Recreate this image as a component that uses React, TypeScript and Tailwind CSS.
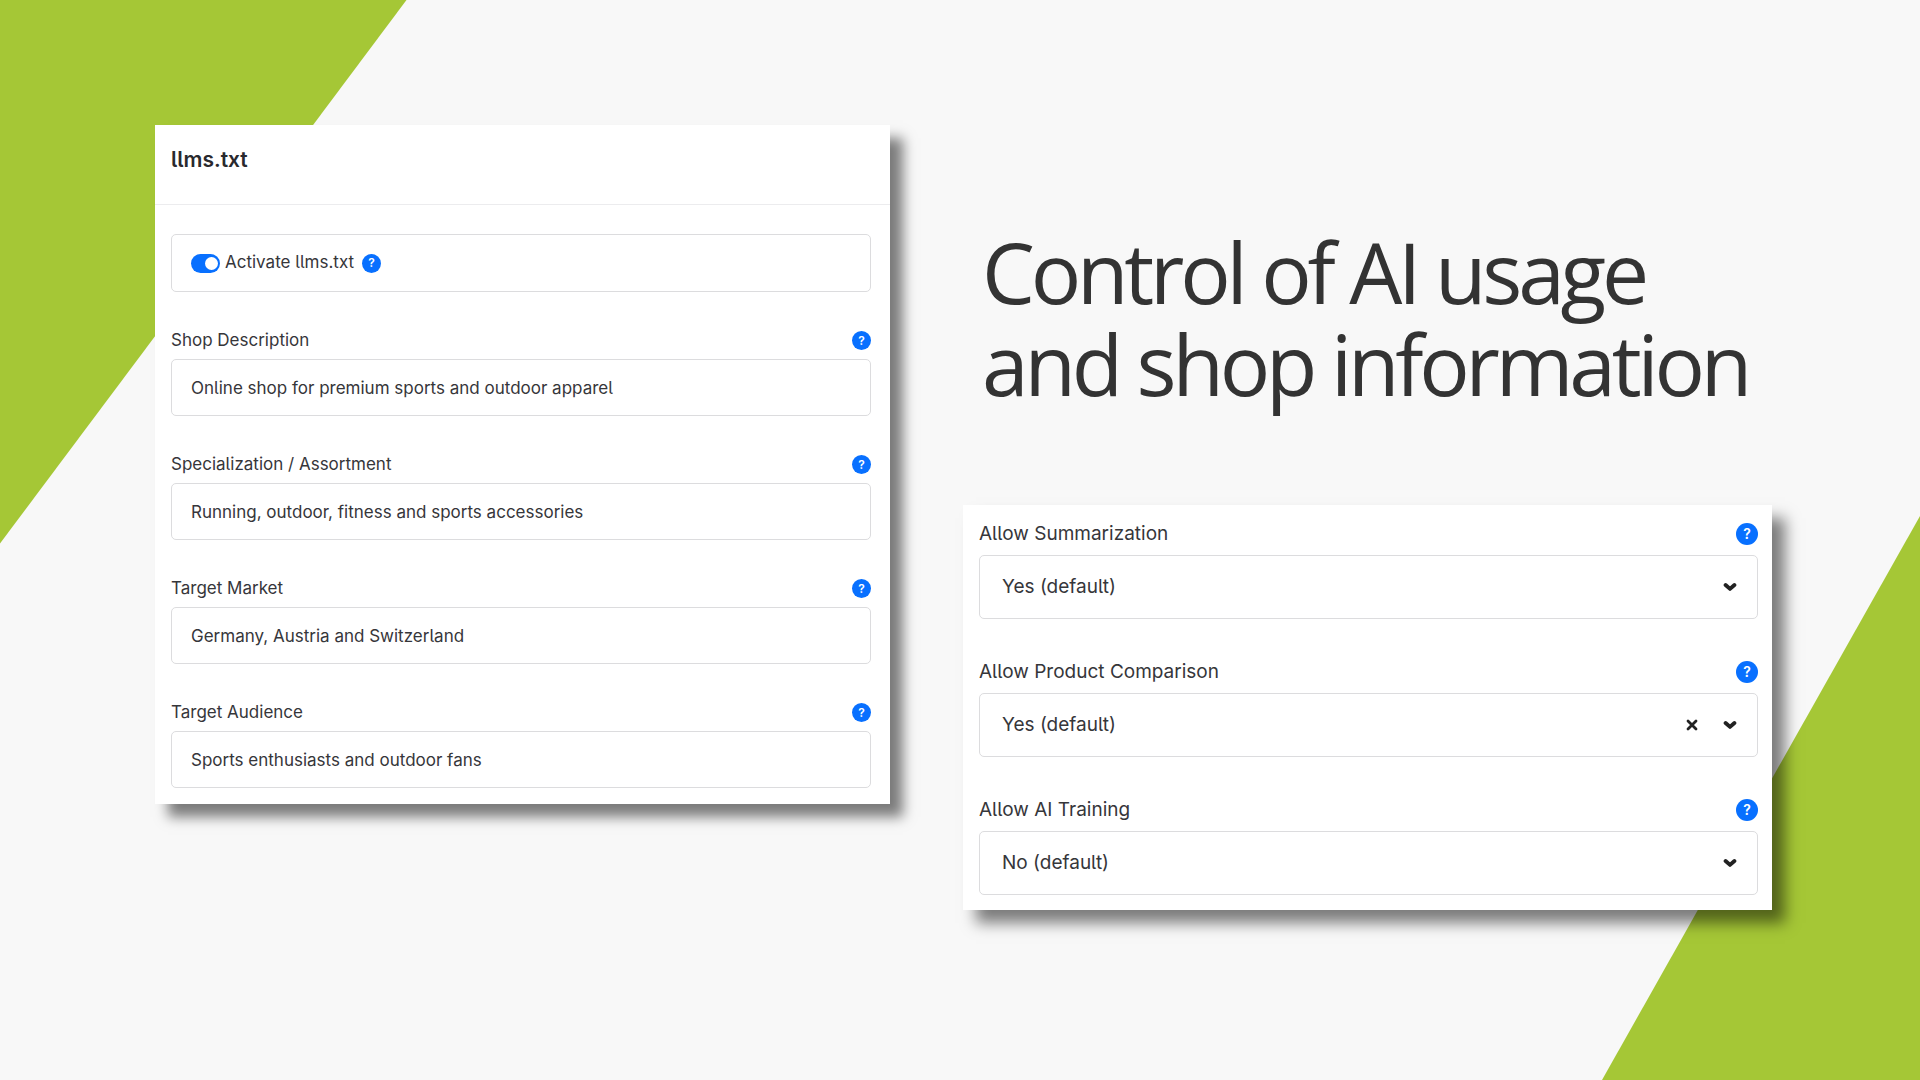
import React, { useState } from "react";
import clsx from "clsx";

interface HelpButtonProps {
  label: string;
  large?: boolean;
}

const HelpButton: React.FC<HelpButtonProps> = ({ label, large }) => (
  <button
    type="button"
    aria-label={`Help: ${label}`}
    className={clsx(
      "flex shrink-0 items-center justify-center rounded-full bg-[#0870ff] font-semibold text-white",
      large ? "size-[22px] text-sm" : "size-[19px] text-xs"
    )}
  >
    ?
  </button>
);

interface TextFieldProps {
  id: string;
  label: string;
  defaultValue: string;
}

const TextField: React.FC<TextFieldProps> = ({ id, label, defaultValue }) => (
  <div>
    <div className="mb-2 flex h-[21px] items-center justify-between">
      <label htmlFor={id}>{label}</label>
      <HelpButton label={label} />
    </div>
    <input
      id={id}
      type="text"
      defaultValue={defaultValue}
      className="block h-[57px] w-full rounded-[5px] border border-[#dcdcde] bg-white px-[19px] outline-none focus:border-[#0870ff]"
    />
  </div>
);

interface SelectFieldProps {
  id: string;
  label: string;
  defaultValue: string;
  clearable?: boolean;
}

const SelectField: React.FC<SelectFieldProps> = ({
  id,
  label,
  defaultValue,
  clearable,
}) => {
  const [value, setValue] = useState(defaultValue);

  return (
    <div>
      <div className="mb-[10px] flex h-[22px] items-center justify-between">
        <label htmlFor={id}>{label}</label>
        <HelpButton label={label} large />
      </div>
      <div className="relative">
        <select
          id={id}
          value={value}
          onChange={(e) => setValue(e.target.value)}
          className="block h-16 w-full appearance-none rounded-[5px] border border-[#dcdcde] bg-white px-[22px] outline-none focus:border-[#0870ff]"
        >
          <option value="yes">Yes (default)</option>
          <option value="no">No (default)</option>
        </select>
        <div className="pointer-events-none absolute inset-y-0 right-[21px] flex items-center gap-[25px]">
          {clearable && (
            <button
              type="button"
              aria-label={`Clear ${label}`}
              onClick={() => setValue(defaultValue)}
              className="pointer-events-auto"
            >
              <svg viewBox="0 0 12 12" className="size-3" aria-hidden="true">
                <path
                  d="M2 2l8 8M10 2l-8 8"
                  fill="none"
                  stroke="#222"
                  strokeWidth="2.8"
                  strokeLinecap="round"
                />
              </svg>
            </button>
          )}
          <svg viewBox="0 0 14 10" className="h-[10px] w-[14px]" aria-hidden="true">
            <path
              d="M2.6 3L7 6.9 11.4 3"
              fill="none"
              stroke="#222"
              strokeWidth="3.9"
              strokeLinecap="round"
              strokeLinejoin="round"
            />
          </svg>
        </div>
      </div>
    </div>
  );
};

const textFields: TextFieldProps[] = [
  {
    id: "shop-description",
    label: "Shop Description",
    defaultValue: "Online shop for premium sports and outdoor apparel",
  },
  {
    id: "specialization",
    label: "Specialization / Assortment",
    defaultValue: "Running, outdoor, fitness and sports accessories",
  },
  {
    id: "target-market",
    label: "Target Market",
    defaultValue: "Germany, Austria and Switzerland",
  },
  {
    id: "target-audience",
    label: "Target Audience",
    defaultValue: "Sports enthusiasts and outdoor fans",
  },
];

const selectFields: SelectFieldProps[] = [
  { id: "summarization", label: "Allow Summarization", defaultValue: "yes" },
  {
    id: "comparison",
    label: "Allow Product Comparison",
    defaultValue: "yes",
    clearable: true,
  },
  { id: "training", label: "Allow AI Training", defaultValue: "no" },
];

export default function App() {
  const [active, setActive] = useState(true);

  return (
    <main className="relative min-h-screen overflow-hidden bg-[#f8f8f8] font-['Inter',sans-serif] text-[#36363a] [font-feature-settings:'cv05']">
      {/* green corners */}
      <svg
        viewBox="0 0 1920 1080"
        preserveAspectRatio="none"
        className="absolute inset-0 h-full w-full"
        aria-hidden="true"
      >
        <path d="M0 0H406.500L0 543.500Z" fill="#a5c736" />
        <path d="M1920 516V1080H1602Z" fill="#a5c736" />
      </svg>

      <div className="relative grid grid-cols-[735fr_809fr] items-start gap-[73px] pt-[125px] pr-[148px] pb-20 pl-[155px]">
        <section className="bg-white text-[17px] shadow-[13px_13px_12px_rgba(0,0,0,0.5)]">
          <header className="border-b border-[#ececee] px-4 pt-[21px] pb-[30px]">
            <h2 className="text-[21px] leading-7 font-semibold text-[#29292d]">
              llms.txt
            </h2>
          </header>
          <form className="flex flex-col gap-[38px] pt-[29px] pr-[19px] pb-4 pl-4">
            <div className="flex h-[58px] items-center rounded-[5px] border border-[#dcdcde] px-[19px]">
              <label className="flex cursor-pointer items-center gap-[5px]">
                <input
                  type="checkbox"
                  role="switch"
                  checked={active}
                  onChange={(e) => setActive(e.target.checked)}
                  className="flex h-[19px] w-[29px] appearance-none items-center rounded-full bg-gray-300 px-[2px] before:size-[13px] before:rounded-full before:bg-white before:content-[''] checked:justify-end checked:bg-[#0870ff]"
                />
                Activate llms.txt
              </label>
              <span className="ml-2 flex">
                <HelpButton label="Activate llms.txt" />
              </span>
            </div>
            {textFields.map((field) => (
              <TextField key={field.id} {...field} />
            ))}
          </form>
        </section>

        <div className="pt-[101px]">
          <h1 className="pl-[19px] font-['Open_Sans',sans-serif] text-[84px] leading-[92px] tracking-tighter text-[#333]">
            <span className="block">Control of AI usage</span>
            <span className="block">and shop information</span>
          </h1>
          <section className="mt-[95px] bg-white text-[19px] shadow-[13px_13px_14px_rgba(0,0,0,0.5)]">
            <form className="flex flex-col gap-[42px] pt-[18px] pr-[14px] pb-[15px] pl-4">
              {selectFields.map((field) => (
                <SelectField key={field.id} {...field} />
              ))}
            </form>
          </section>
        </div>
      </div>
    </main>
  );
}
